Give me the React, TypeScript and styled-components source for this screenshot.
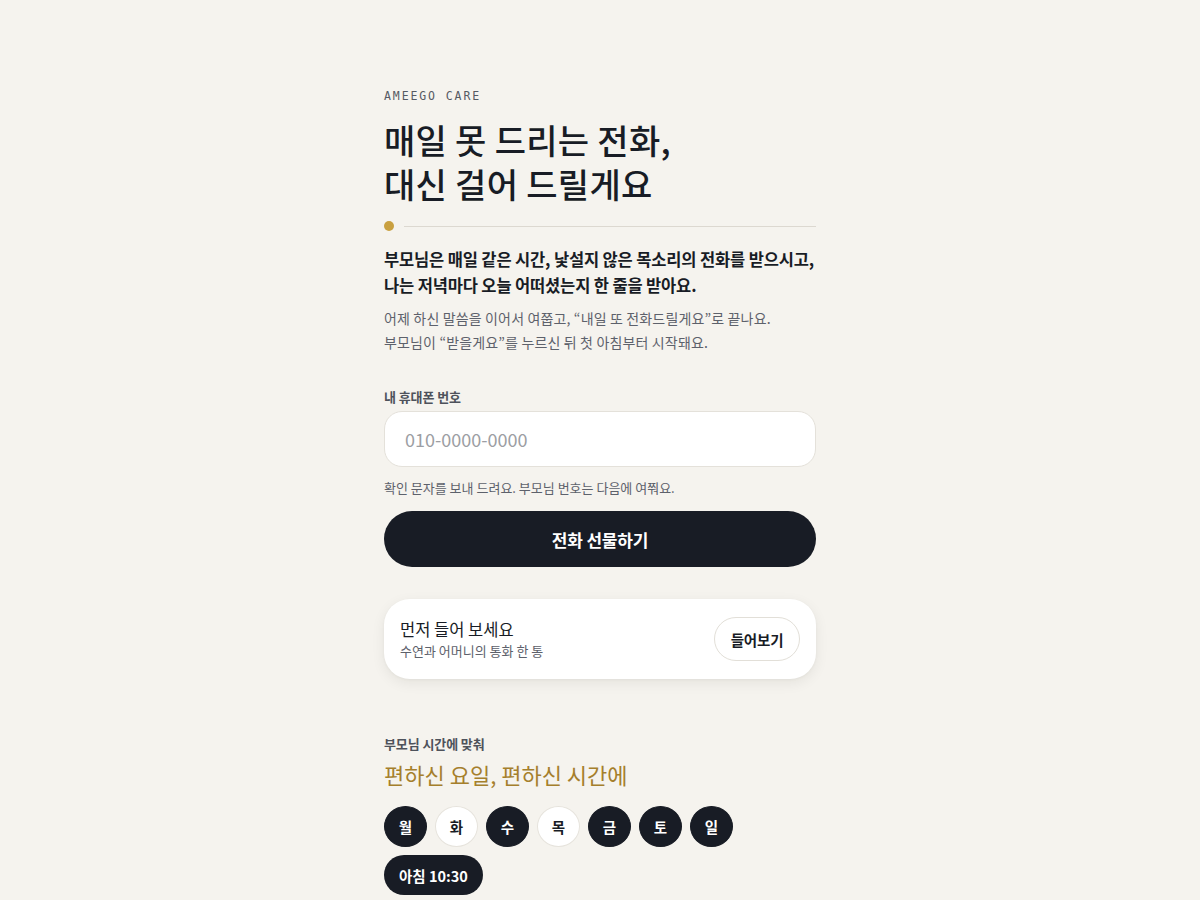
import React from "react";
import styled, { createGlobalStyle } from "styled-components";

const Global = createGlobalStyle`
  html, body { margin: 0; padding: 0; background: #f5f3ee; }
  body { font-family: "Noto Sans CJK KR", "Noto Sans", sans-serif; color: #181c25; }
  * { box-sizing: border-box; }
`;

const Page = styled.div`
  display: flex;
  justify-content: center;
  padding-top: 88px;
  min-height: 900px;
`;

const Column = styled.main`
  width: 432px;
  display: flex;
  flex-direction: column;
`;

const Brand = styled.div`
  font-family: "DejaVu Sans Mono", "Liberation Mono", monospace;
  font-size: 11.5px;
  line-height: 16px;
  letter-spacing: 1.9px;
  color: #555a63;
`;

const Title = styled.h1`
  margin: 14px 0 0;
  font-size: 34px;
  line-height: 44px;
  font-weight: 500;
  letter-spacing: 0.3px;
  color: #181c25;
`;

const TitleLine = styled.span`
  display: block;
`;

const Divider = styled.div`
  margin-top: 15px;
  display: flex;
  align-items: center;
  gap: 10px;
`;

const Dot = styled.span`
  width: 10px;
  height: 10px;
  border-radius: 50%;
  background: #c9a040;
  flex: none;
`;

const Rule = styled.span`
  flex: 1;
  height: 1px;
  background: #dcd8d0;
`;

const Lead = styled.p`
  margin: 15px 0 0;
  font-size: 16.5px;
  line-height: 26px;
  font-weight: 700;
  letter-spacing: -0.15px;
  color: #181c25;
`;

const Sub = styled.p`
  margin: 8px 0 0;
  font-size: 14px;
  line-height: 24px;
  color: #5d616b;
  letter-spacing: 0.15px;
`;

const Label = styled.label<{ $top: number }>`
  display: block;
  margin-top: ${(p) => p.$top}px;
  font-size: 13px;
  line-height: 19px;
  font-weight: 700;
  color: #4e525b;
  letter-spacing: -0.1px;
`;

const Input = styled.input`
  margin-top: 5px;
  height: 56px;
  width: 100%;
  border: 1px solid #e4e1da;
  border-radius: 18px;
  background: #ffffff;
  padding: 0 20px;
  font-family: "Noto Sans CJK KR", "Noto Sans", sans-serif;
  font-size: 18px;
  color: #181c25;
  outline: none;
  &::placeholder { color: #9c9ea3; }
`;

const Help = styled.p`
  margin: 11px 0 0;
  font-size: 13px;
  line-height: 20px;
  color: #5d616b;
  letter-spacing: 0;
`;

const Primary = styled.button`
  margin-top: 13px;
  height: 56px;
  width: 100%;
  border: none;
  border-radius: 28px;
  background: #181c25;
  color: #ffffff;
  font-family: "Noto Sans CJK KR", "Noto Sans", sans-serif;
  font-size: 17px;
  font-weight: 700;
  letter-spacing: -0.2px;
  cursor: pointer;
`;

const Card = styled.section`
  margin-top: 32px;
  height: 80px;
  background: #ffffff;
  border-radius: 26px;
  box-shadow: 0 4px 14px rgba(30, 25, 15, 0.07), 0 1px 3px rgba(30, 25, 15, 0.04);
  display: flex;
  align-items: center;
  justify-content: space-between;
  padding: 0 16px;
`;

const CardText = styled.div`
  display: flex;
  flex-direction: column;
`;

const CardTitle = styled.div`
  font-size: 16.5px;
  line-height: 24px;
  color: #181c25;
  letter-spacing: 0;
`;

const CardSub = styled.div`
  font-size: 13px;
  line-height: 20px;
  color: #5d616b;
  letter-spacing: 0;
`;

const Ghost = styled.button`
  height: 44px;
  width: 86px;
  border-radius: 22px;
  border: 1px solid #e2dfd8;
  background: #ffffff;
  font-family: "Noto Sans CJK KR", "Noto Sans", sans-serif;
  font-size: 14.5px;
  font-weight: 700;
  color: #181c25;
  letter-spacing: -0.2px;
`;

const Accent = styled.h2`
  margin: 5px 0 0;
  font-size: 22px;
  line-height: 32px;
  font-weight: 400;
  color: #a57f2c;
  letter-spacing: 0;
`;

const Days = styled.div`
  margin-top: 16px;
  display: flex;
  gap: 8px;
`;

const Day = styled.button<{ $on: boolean }>`
  width: 43px;
  height: 41px;
  border-radius: 50%;
  border: 1px solid ${(p) => (p.$on ? "#181c25" : "#e6e3dc")};
  background: ${(p) => (p.$on ? "#181c25" : "#ffffff")};
  color: ${(p) => (p.$on ? "#ffffff" : "#181c25")};
  font-family: "Noto Sans CJK KR", "Noto Sans", sans-serif;
  font-size: 14.5px;
  font-weight: 700;
  padding: 0;
`;

const TimeRow = styled.div`
  margin-top: 8px;
  display: flex;
`;

const Time = styled.button`
  height: 40px;
  padding: 0 15px;
  border-radius: 20px;
  border: none;
  background: #181c25;
  color: #ffffff;
  font-family: "Noto Sans CJK KR", "Noto Sans", sans-serif;
  font-size: 14.5px;
  font-weight: 700;
`;

const days: { d: string; on: boolean }[] = [
  { d: "월", on: true },
  { d: "화", on: false },
  { d: "수", on: true },
  { d: "목", on: false },
  { d: "금", on: true },
  { d: "토", on: true },
  { d: "일", on: true },
];

export default function App() {
  return (
    <>
      <Global />
      <Page>
        <Column>
          <Brand>AMEEGO CARE</Brand>
          <Title>
            <TitleLine>매일 못 드리는 전화,</TitleLine>
            <TitleLine>대신 걸어 드릴게요</TitleLine>
          </Title>
          <Divider>
            <Dot />
            <Rule />
          </Divider>
          <Lead>
            부모님은 매일 같은 시간, 낯설지 않은 목소리의 전화를 받으시고,
            <br />
            나는 저녁마다 오늘 어떠셨는지 한 줄을 받아요.
          </Lead>
          <Sub>
            어제 하신 말씀을 이어서 여쭙고, “내일 또 전화드릴게요”로 끝나요.
            <br />
            부모님이 “받을게요”를 누르신 뒤 첫 아침부터 시작돼요.
          </Sub>
          <Label $top={33} htmlFor="phone">내 휴대폰 번호</Label>
          <Input id="phone" placeholder="010-0000-0000" />
          <Help>확인 문자를 보내 드려요. 부모님 번호는 다음에 여쭤요.</Help>
          <Primary>전화 선물하기</Primary>
          <Card>
            <CardText>
              <CardTitle>먼저 들어 보세요</CardTitle>
              <CardSub>수연과 어머니의 통화 한 통</CardSub>
            </CardText>
            <Ghost>들어보기</Ghost>
          </Card>
          <Label $top={55}>부모님 시간에 맞춰</Label>
          <Accent>편하신 요일, 편하신 시간에</Accent>
          <Days>
            {days.map((x) => (
              <Day key={x.d} $on={x.on}>
                {x.d}
              </Day>
            ))}
          </Days>
          <TimeRow>
            <Time>아침 10:30</Time>
          </TimeRow>
        </Column>
      </Page>
    </>
  );
}
